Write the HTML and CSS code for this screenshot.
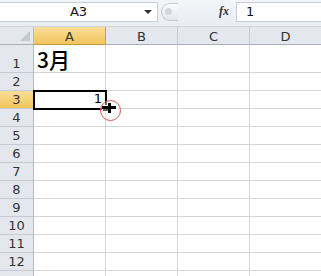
FILE: index.html
```html
<!DOCTYPE html>
<html lang="ja">
<head>
    <meta charset="UTF-8">
    <title>Sheet</title>
    <link rel="stylesheet" href="styles.css">
</head>
<body>
    <div class="formula-bar">
        <div class="name-box">
            <span class="name-text">A3</span>
            <span class="name-arrow"></span>
        </div>
        <div class="grip"><span class="grip-dot"></span></div>
        <div class="fx">fx</div>
        <div class="formula-input">1</div>
    </div>

    <div class="sheet">
        <div class="corner"><span class="corner-tri"></span></div>
        <div class="col-head active">A</div>
        <div class="col-head">B</div>
        <div class="col-head">C</div>
        <div class="col-head">D</div>

        <div class="row-head">1</div>
        <div class="cell title">3月</div>
        <div class="cell"></div><div class="cell"></div><div class="cell"></div>

        <div class="row-head">2</div>
        <div class="cell"></div><div class="cell"></div><div class="cell"></div><div class="cell"></div>

        <div class="row-head active">3</div>
        <div class="cell selected">1<span class="handle"></span><span class="cursor"></span></div>
        <div class="cell"></div><div class="cell"></div><div class="cell"></div>

        <div class="row-head">4</div>
        <div class="cell"></div><div class="cell"></div><div class="cell"></div><div class="cell"></div>
        <div class="row-head">5</div>
        <div class="cell"></div><div class="cell"></div><div class="cell"></div><div class="cell"></div>
        <div class="row-head">6</div>
        <div class="cell"></div><div class="cell"></div><div class="cell"></div><div class="cell"></div>
        <div class="row-head">7</div>
        <div class="cell"></div><div class="cell"></div><div class="cell"></div><div class="cell"></div>
        <div class="row-head">8</div>
        <div class="cell"></div><div class="cell"></div><div class="cell"></div><div class="cell"></div>
        <div class="row-head">9</div>
        <div class="cell"></div><div class="cell"></div><div class="cell"></div><div class="cell"></div>
        <div class="row-head">10</div>
        <div class="cell"></div><div class="cell"></div><div class="cell"></div><div class="cell"></div>
        <div class="row-head">11</div>
        <div class="cell"></div><div class="cell"></div><div class="cell"></div><div class="cell"></div>
        <div class="row-head">12</div>
        <div class="cell"></div><div class="cell"></div><div class="cell"></div><div class="cell"></div>
        <div class="row-head"></div>
        <div class="cell"></div><div class="cell"></div><div class="cell"></div><div class="cell"></div>
    </div>
</body>
</html>
```

FILE: styles.css
```css
body {
    margin: 0;
    width: 321px;
    height: 276px;
    overflow: hidden;
    background-color: #fff;
    font-family: "DejaVu Sans", "Noto Sans CJK JP", sans-serif;
}
.formula-bar {
    display: flex;
    align-items: center;
    height: 27px;
    background: linear-gradient(#f3f5f8, #e9edf2);
    border-bottom: 1px solid #d2d7de;
    box-sizing: border-box;
}
.name-box {
    position: relative;
    width: 158px;
    height: 20px;
    margin-top: -3px;
    background-color: #fff;
    border: 1px solid #c8ced6;
    border-left: none;
    box-sizing: border-box;
    display: flex;
    align-items: center;
    justify-content: center;
    font-size: 13px;
    color: #111;
}
.name-arrow {
    position: absolute;
    right: 5px;
    top: 7px;
    border-left: 4px solid transparent;
    border-right: 4px solid transparent;
    border-top: 4px solid #333;
}
.grip {
    width: 17px;
    height: 18px;
    margin: -3px 0 0 3px;
    border-radius: 9px 0 0 9px;
    border: 1px solid #c4cad2;
    border-right: none;
    background: linear-gradient(#fbfcfd, #e3e7ec);
    display: flex;
    align-items: center;
    padding-left: 3px;
    box-sizing: border-box;
}
.grip-dot {
    width: 7px;
    height: 7px;
    border-radius: 50%;
    background: #d3d7dc;
}
.fx {
    margin: -3px 0 0 auto;
    width: 14px;
    font-family: "Liberation Serif", serif;
    font-style: italic;
    font-weight: bold;
    font-size: 12px;
    color: #333;
    padding-right: 3px;
}
.formula-input {
    width: 85px;
    height: 20px;
    margin-top: -3px;
    background-color: #fff;
    border: 1px solid #c8ced6;
    border-right: none;
    box-sizing: border-box;
    padding-left: 9px;
    font-size: 13px;
    line-height: 18px;
    color: #111;
}
.sheet {
    display: grid;
    grid-template-columns: 34px repeat(4, 72px);
    grid-template-rows: 18px 28px;
    grid-auto-rows: 18px;
}
.corner, .col-head, .row-head {
    background: #e4e8ee;
    color: #333;
    font-size: 13px;
    box-sizing: border-box;
    display: flex;
    align-items: center;
    justify-content: center;
}
.corner {
    position: relative;
    border-right: 1px solid #b6bcc6;
    border-bottom: 1px solid #a9b0ba;
}
.corner-tri {
    position: absolute;
    right: 3px;
    bottom: 3px;
    border-left: 10px solid transparent;
    border-bottom: 10px solid #c3c8cf;
}
.col-head {
    border-right: 1px solid #c6cbd3;
    border-bottom: 1px solid #a9b0ba;
    padding-top: 1px;
}
.row-head {
    border-right: 1px solid #b6bcc6;
    border-bottom: 1px solid #c6cbd3;
    align-items: flex-end;
    padding-bottom: 1px;
}
.col-head.active, .row-head.active {
    background: linear-gradient(#f9dd9a, #f2c55c);
    border-right-color: #c6a353;
}
.col-head.active {
    border-bottom-color: #c29b3e;
}
.cell {
    border-right: 1px solid #d4d4d4;
    border-bottom: 1px solid #d4d4d4;
    box-sizing: border-box;
    font-size: 13px;
    color: #000;
}
.title {
    font-family: "Noto Sans CJK JP", sans-serif;
    font-size: 21px;
    font-weight: 500;
    line-height: 29px;
    padding-left: 3px;
}
.selected {
    position: relative;
    text-align: right;
    padding-right: 3px;
    line-height: 16px;
    outline: 2px solid #000;
    outline-offset: -1px;
    z-index: 1;
}
.handle {
    position: absolute;
    right: -4px;
    bottom: -4px;
    width: 5px;
    height: 5px;
    background: #000;
    border: 1px solid #fff;
}
.cursor {
    position: absolute;
    right: -16px;
    bottom: -13px;
    width: 19px;
    height: 19px;
    border: 1px solid #d9534f;
    border-radius: 50%;
    background: rgba(255, 255, 255, 0.4);
}
.cursor::before, .cursor::after {
    content: "";
    position: absolute;
    background: #000;
}
.cursor::before {
    left: 1px;
    top: 5px;
    width: 14px;
    height: 3px;
}
.cursor::after {
    left: 7px;
    top: 2px;
    width: 3px;
    height: 10px;
}
```
